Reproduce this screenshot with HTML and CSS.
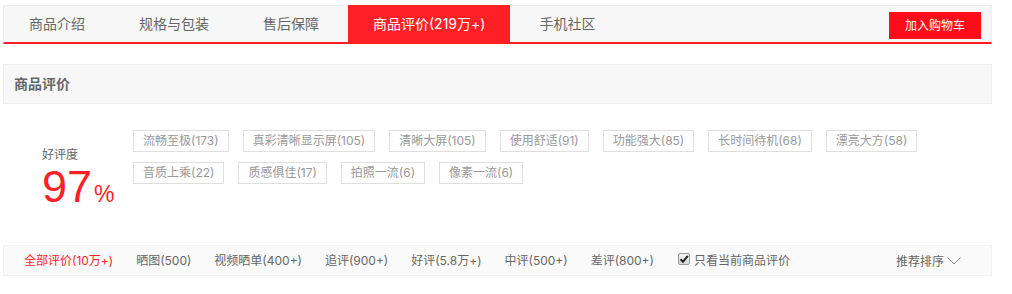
FILE: index.html
```html
<!DOCTYPE html>
<html lang="zh-CN">
<head>
  <meta charset="UTF-8">
  <meta name="viewport" content="width=device-width, initial-scale=1.0">
  <title>商品评价</title>
  <link rel="stylesheet" href="styles.css">
</head>
<body>
  <div class="page">
    <div class="tab-bar">
      <ul class="tabs">
        <li class="tab">商品介绍</li>
        <li class="tab">规格与包装</li>
        <li class="tab">售后保障</li>
        <li class="tab tab-active">商品评价(219万+)</li>
        <li class="tab">手机社区</li>
      </ul>
      <a class="cart-btn" href="#">加入购物车</a>
    </div>

    <div class="section-head">商品评价</div>

    <div class="summary">
      <div class="rate">
        <div class="rate-label">好评度</div>
        <div class="rate-value">97<span class="rate-unit">%</span></div>
      </div>
      <div class="tags">
        <span class="tag">流畅至极(173)</span>
        <span class="tag">真彩清晰显示屏(105)</span>
        <span class="tag">清晰大屏(105)</span>
        <span class="tag">使用舒适(91)</span>
        <span class="tag">功能强大(85)</span>
        <span class="tag">长时间待机(68)</span>
        <span class="tag">漂亮大方(58)</span>
        <span class="tag">音质上乘(22)</span>
        <span class="tag">质感俱佳(17)</span>
        <span class="tag">拍照一流(6)</span>
        <span class="tag">像素一流(6)</span>
      </div>
    </div>

    <div class="filter-bar">
      <ul class="filters">
        <li class="filter filter-active">全部评价(10万+)</li>
        <li class="filter">晒图(500)</li>
        <li class="filter">视频晒单(400+)</li>
        <li class="filter">追评(900+)</li>
        <li class="filter">好评(5.8万+)</li>
        <li class="filter">中评(500+)</li>
        <li class="filter">差评(800+)</li>
        <li class="filter filter-check">
          <span class="checkbox">
            <svg width="10" height="10" viewBox="0 0 10 10"><path d="M1.5 5.2 L4 7.8 L8.8 1.8" fill="none" stroke="#222" stroke-width="2"/></svg>
          </span>
          只看当前商品评价
        </li>
      </ul>
      <div class="sort">
        推荐排序
        <svg class="chevron" width="14" height="8" viewBox="0 0 14 8"><polyline points="0.5,0.5 7,7 13.5,0.5" fill="none" stroke="#888" stroke-width="1"/></svg>
      </div>
    </div>
  </div>
</body>
</html>
```

FILE: styles.css
```css
body {
  margin: 0;
  padding: 0;
  font-family: Inter, "Noto Sans CJK SC", sans-serif;
  color: #666;
  background: #fff;
}
ul {
  margin: 0;
  padding: 0;
  list-style: none;
}
.page {
  width: 989px;
  padding: 5px 0 0 3px;
}

/* top tabs */
.tab-bar {
  display: flex;
  justify-content: space-between;
  height: 36px;
  background: #f7f7f7;
  border: 1px solid #eee;
  border-bottom: 2px solid #ff1f27;
}
.tabs {
  display: flex;
  gap: 4px;
}
.tab {
  padding: 0 25px;
  font-size: 14px;
  line-height: 36px;
  color: #666;
}
.tab-active {
  background: #ff1f27;
  color: #fff;
  margin-top: -1px;
  line-height: 37px;
}
.cart-btn {
  align-self: flex-start;
  margin: 6px 10px 0 0;
  height: 27px;
  padding: 0 16px;
  line-height: 27px;
  font-size: 12px;
  color: #fff;
  background: #ff0d1a;
  text-decoration: none;
}

/* section header */
.section-head {
  margin-top: 20px;
  height: 38px;
  line-height: 38px;
  padding-left: 10px;
  background: #f7f7f7;
  border: 1px solid #eee;
  font-size: 14px;
  font-weight: bold;
  color: #666;
}

/* summary */
.summary {
  display: flex;
  box-sizing: border-box;
  height: 141px;
  padding-top: 26px;
}
.rate {
  width: 91px;
  padding-left: 39px;
  padding-top: 15px;
}
.rate-label {
  font-size: 12px;
  line-height: 20px;
  color: #666;
}
.rate-value {
  font-family: "Liberation Sans", sans-serif;
  font-size: 45px;
  line-height: 44px;
  color: #ff1f27;
}
.rate-unit {
  font-size: 23px;
  margin-left: 2px;
}
.tags {
  display: flex;
  flex-wrap: wrap;
  align-content: flex-start;
  gap: 10px 14px;
  width: 800px;
}
.tag {
  height: 20px;
  line-height: 20px;
  padding: 0 9px;
  border: 1px solid #dfdfdf;
  font-size: 12px;
  color: #999;
}

/* filter bar */
.filter-bar {
  display: flex;
  justify-content: space-between;
  align-items: center;
  height: 29px;
  background: #fafafa;
  border: 1px solid #f2f2f2;
  font-size: 12px;
}
.filters {
  display: flex;
  align-items: center;
  gap: 23px;
  padding-left: 20px;
}
.filter {
  line-height: 29px;
  color: #666;
}
.filter-active {
  color: #ff1f27;
}
.filter-check {
  display: flex;
  align-items: center;
  gap: 4px;
  margin-left: 1px;
}
.checkbox {
  display: flex;
  align-items: center;
  justify-content: center;
  box-sizing: border-box;
  width: 12px;
  height: 12px;
  margin-top: -4px;
  border: 1px solid #9a9a9a;
  border-radius: 2px;
  background: linear-gradient(#f4f4f4, #d8d8d8);
}
.sort {
  display: flex;
  align-items: center;
  gap: 3px;
  padding-right: 30px;
  color: #666;
}
.chevron {
  margin-top: 1px;
}
```
